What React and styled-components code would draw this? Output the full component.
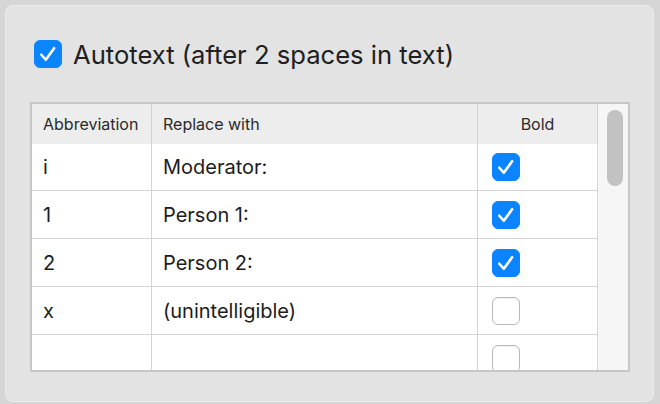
import React from "react";
import styled, { createGlobalStyle } from "styled-components";

const GlobalStyle = createGlobalStyle`
  html, body {
    margin: 0;
    padding: 0;
    background: #d6d6d6;
  }
  body {
    font-family: Inter, "Noto Sans", sans-serif;
    color: #222;
    -webkit-font-smoothing: antialiased;
  }
`;

const Panel = styled.div`
  box-sizing: border-box;
  margin: 5px 0 0 5px;
  width: 649px;
  height: 397px;
  background: #e3e3e3;
  border: 1px solid #ececec;
  border-radius: 8px;
  padding: 34px 0 0 24px;
`;

const OptionRow = styled.label`
  display: flex;
  align-items: center;
  gap: 11px;
  height: 28px;
  margin-left: 4px;
  font-size: 25.6px;
  color: #202020;
`;

const Box = styled.span`
  box-sizing: border-box;
  flex: none;
  display: flex;
  align-items: center;
  justify-content: center;
  width: 28px;
  height: 28px;
  border-radius: 6px;
  background: ${({ checked }) => (checked ? "#0b84ff" : "#ffffff")};
  border: 1px solid ${({ checked }) => (checked ? "#0b84ff" : "#b9b9b9")};
  box-shadow: ${({ checked }) =>
    checked ? "none" : "inset 0 1px 1px rgba(0,0,0,0.06)"};
`;

const Check = () => (
  <svg width="28" height="28" viewBox="0 0 28 28" fill="none">
    <path
      d="M6.8 14.8 L11.6 20.2 L20.6 7.8"
      stroke="#fff"
      strokeWidth="2.8"
      strokeLinecap="round"
      strokeLinejoin="round"
    />
  </svg>
);

const Checkbox = ({ checked }) => (
  <Box checked={checked}>{checked && <Check />}</Box>
);

const Table = styled.div`
  display: flex;
  margin-top: 34px;
  width: 596px;
  height: 266px;
  border: 2px solid #c6c6c6;
  background: #fff;
`;

const Grid = styled.div`
  display: grid;
  grid-template-columns: 120px 326px 120px;
  grid-template-rows: 40px 46px;
  grid-auto-rows: 48px;
  align-content: start;
  width: 566px;
  overflow: hidden;
`;

const HeadCell = styled.div`
  display: flex;
  align-items: center;
  justify-content: ${({ center }) => (center ? "center" : "flex-start")};
  padding-left: ${({ center }) => (center ? "0" : "11px")};
  background: #ededed;
  border-right: 1px solid #d2d2d2;
  font-size: 16px;
  color: #2a2a2a;
`;

const Cell = styled.div`
  display: flex;
  align-items: center;
  padding-left: ${({ box }) => (box ? "14px" : "11px")};
  border-right: 1px solid #d4d4d4;
  border-top: ${({ first }) => (first ? "none" : "1px solid #d4d4d4")};
  font-size: 20px;
  color: #1c1c1c;
`;

const ScrollTrack = styled.div`
  flex: none;
  width: 30px;
  background: #f6f6f6;
  padding: 6px 0 0 9px;
  box-sizing: border-box;
`;

const Thumb = styled.div`
  width: 16px;
  height: 76px;
  border-radius: 8px;
  background: #c2c2c2;
`;

const rows = [
  { abbr: "i", text: "Moderator:", bold: true },
  { abbr: "1", text: "Person 1:", bold: true },
  { abbr: "2", text: "Person 2:", bold: true },
  { abbr: "x", text: "(unintelligible)", bold: false },
  { abbr: "", text: "", bold: false },
];

const App = () => (
  <>
    <GlobalStyle />
    <Panel>
      <OptionRow>
        <Checkbox checked />
        Autotext (after 2 spaces in text)
      </OptionRow>
      <Table>
        <Grid>
          <HeadCell>Abbreviation</HeadCell>
          <HeadCell>Replace with</HeadCell>
          <HeadCell center>Bold</HeadCell>
          {rows.map((row, i) => (
            <React.Fragment key={i}>
              <Cell first={i === 0}>{row.abbr}</Cell>
              <Cell first={i === 0}>{row.text}</Cell>
              <Cell first={i === 0} box>
                <Checkbox checked={row.bold} />
              </Cell>
            </React.Fragment>
          ))}
        </Grid>
        <ScrollTrack>
          <Thumb />
        </ScrollTrack>
      </Table>
    </Panel>
  </>
);

export default App;
